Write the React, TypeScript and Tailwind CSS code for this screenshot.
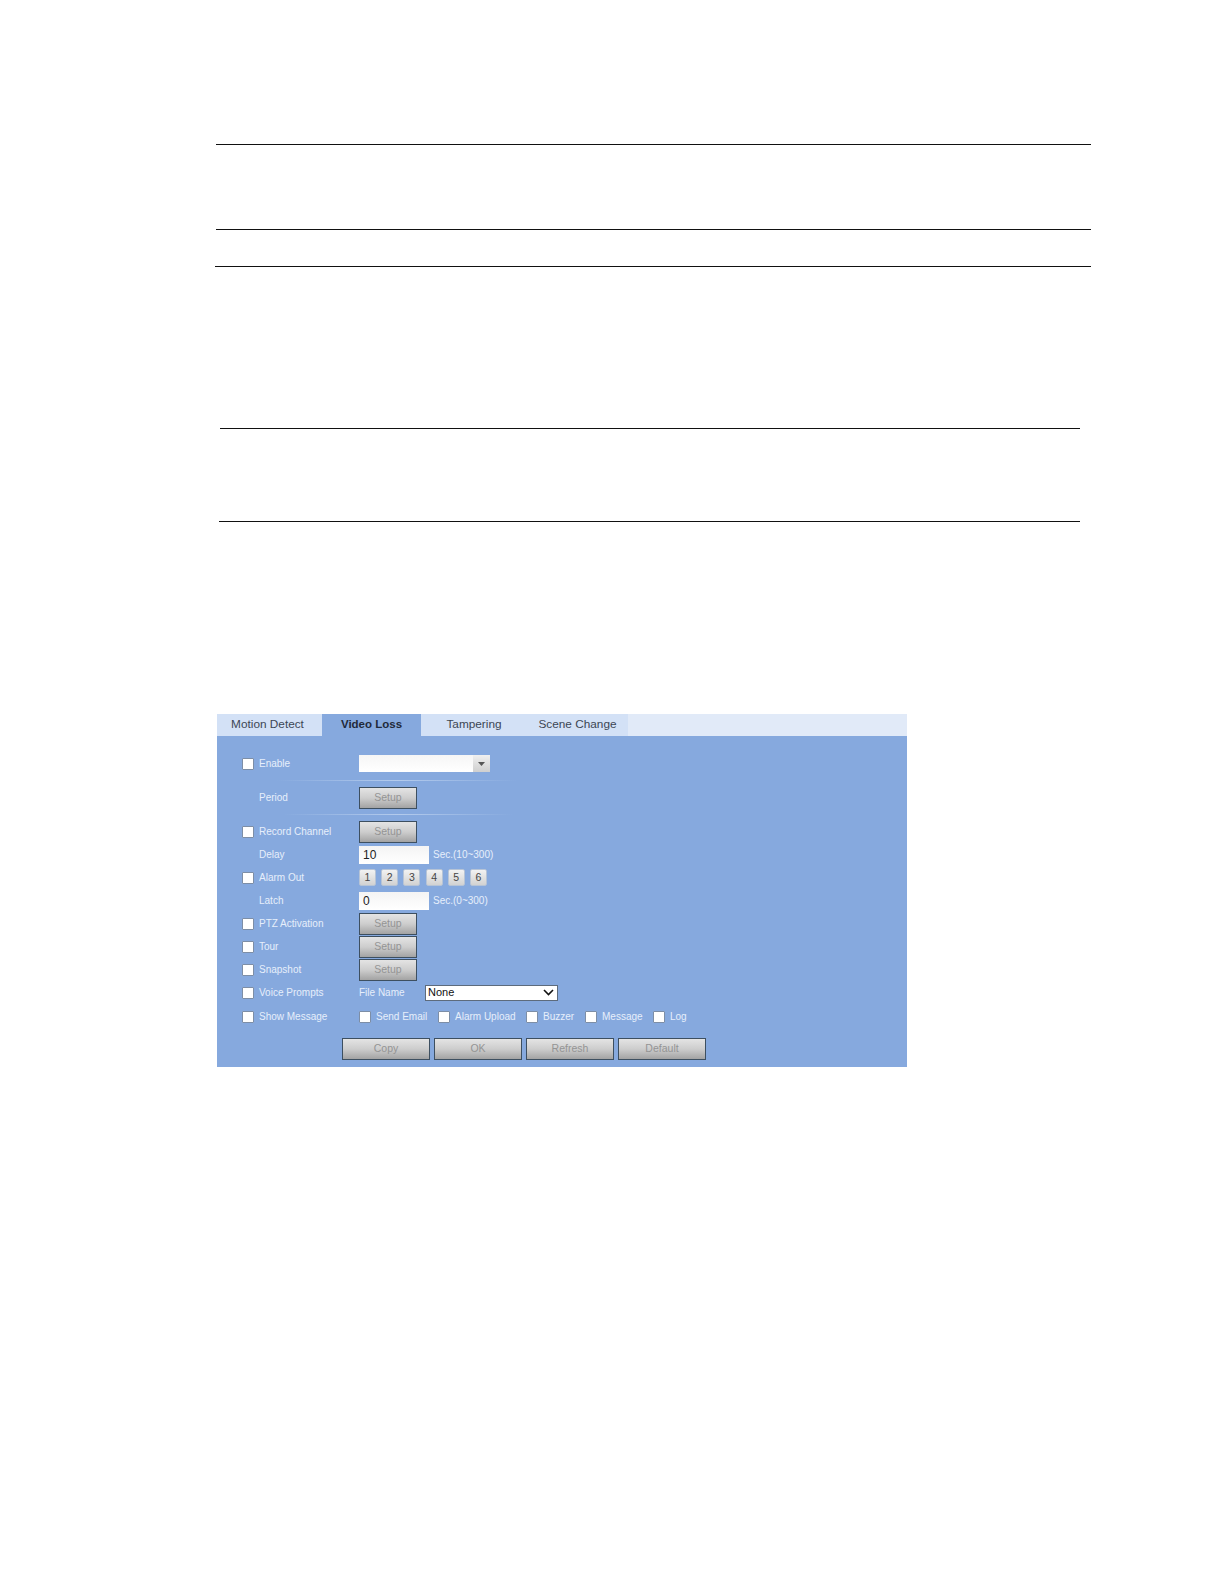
const labelText = "text-[10px] text-[#e6effb] leading-none";

function Rule({ className }: { className: string }) {
  return <div className={"h-px bg-[#111] " + className} />;
}

function Check() {
  return <input type="checkbox" className="appearance-none block w-[12px] h-[12px] bg-white border border-[#7d8ea6] rounded-[1px] shrink-0" />;
}

function SetupButton({ label = "Setup", className = "w-[58px] h-[22px]" }: { label?: string; className?: string }) {
  return (
    <button className={"flex items-center justify-center border border-[#3d4f60] bg-gradient-to-b from-[#e4e4e4] via-[#cdcdcd] to-[#a3a3a3] text-[10.5px] text-[#949494] shrink-0 " + className}>
      {label}
    </button>
  );
}

function Row({ check, label, children, className = "h-[23px]" }: { check?: boolean; label: string; children?: React.ReactNode; className?: string }) {
  return (
    <div className={"flex items-center pl-[25px] " + className}>
      <div className="w-[17px]">{check && <Check />}</div>
      <div className={"w-[100px] " + labelText}>{label}</div>
      {children}
    </div>
  );
}

function TextBox({ value }: { value: string }) {
  return <div className="w-[70px] h-[18px] bg-gradient-to-b from-[#f4f4f4] to-white pl-[4px] text-[12px] leading-[18px] text-[#222]">{value}</div>;
}

function Tab({ label, className, active }: { label: string; className: string; active?: boolean }) {
  return (
    <div className={"flex h-full items-center justify-center " + className + " " + (active ? "bg-[#86a9de] text-[11.5px] font-bold text-[#1f2a3a]" : "bg-[#d3e1f6] text-[11.8px] text-[#3c4654]")}>
      {label}
    </div>
  );
}

function SmallCheck({ label, width }: { label: string; width: string }) {
  return (
    <div className={"flex items-center gap-[5px] " + width}>
      <Check />
      <span className={labelText}>{label}</span>
    </div>
  );
}

function VideoLossPanel() {
  return (
    <div className="ml-[217px] mt-[192px] w-[690px] h-[353px] bg-[#86a9de] font-['Liberation_Sans',Arial,sans-serif]">
      <div className="flex h-[22px] bg-[#e1eaf8]">
        <Tab label="Motion Detect" className="w-[105px] pr-[4px]" />
        <Tab label="Video Loss" className="w-[99px]" active />
        <Tab label="Tampering" className="w-[103px] pl-[3px]" />
        <Tab label="Scene Change" className="w-[104px] pl-[3px]" />
      </div>

      <div className="pt-[19px]">
        <Row check label="Enable" className="h-[17px]">
          <div className="flex w-[131px] h-[17px] bg-gradient-to-b from-[#f6f6f6] to-white">
            <div className="flex-1" />
            <div className="flex w-[17px] items-center justify-center bg-gradient-to-b from-[#f0f0f0] to-[#cfcfcf]">
              <svg width="7" height="4" viewBox="0 0 7 4"><path d="M0 0h7L3.5 4z" fill="#555" /></svg>
            </div>
          </div>
        </Row>
        <div className="ml-[60px] mt-[8px] h-px w-[240px] bg-gradient-to-r from-[#86a9de] via-[#b4cbec] to-[#86a9de]" />
        <Row label="Period" className="h-[22px] mt-[6px]">
          <SetupButton />
        </Row>
        <div className="ml-[66px] mt-[5px] h-px w-[230px] bg-gradient-to-r from-[#86a9de] via-[#b4cbec] to-[#86a9de]" />
        <Row check label="Record Channel" className="h-[23px] mt-[5px]">
          <SetupButton />
        </Row>
        <Row label="Delay">
          <TextBox value="10" />
          <span className={"ml-[4px] " + labelText}>Sec.(10~300)</span>
        </Row>
        <Row check label="Alarm Out">
          <div className="flex gap-[5.2px]">
            {[1, 2, 3, 4, 5, 6].map((n) => (
              <button key={n} className="w-[17px] h-[17px] rounded-[2px] border border-[#b7c4d6] bg-gradient-to-b from-[#f2f2f2] to-[#d2d2d2] text-[10.5px] leading-none text-[#444]">
                {n}
              </button>
            ))}
          </div>
        </Row>
        <Row label="Latch">
          <TextBox value="0" />
          <span className={"ml-[4px] " + labelText}>Sec.(0~300)</span>
        </Row>
        <Row check label="PTZ Activation">
          <SetupButton />
        </Row>
        <Row check label="Tour">
          <SetupButton />
        </Row>
        <Row check label="Snapshot">
          <SetupButton />
        </Row>
        <Row check label="Voice Prompts">
          <div className={"w-[66px] " + labelText}>File Name</div>
          <div className="flex w-[133px] h-[16px] items-center justify-between border border-[#5d6b7c] bg-white pl-[2px] pr-[3px] text-[11px] leading-none text-[#111]">
            None
            <svg width="11" height="7" viewBox="0 0 11 7" fill="none"><path d="M1 1l4.5 4.5L10 1" stroke="#111" strokeWidth="1.6" /></svg>
          </div>
        </Row>
        <Row check label="Show Message" className="h-[23px] mt-[1px]">
          <SmallCheck label="Send Email" width="w-[79px]" />
          <SmallCheck label="Alarm Upload" width="w-[88px]" />
          <SmallCheck label="Buzzer" width="w-[59px]" />
          <SmallCheck label="Message" width="w-[68px]" />
          <SmallCheck label="Log" width="w-[40px]" />
        </Row>
        <div className="mt-[10px] ml-[125px] flex gap-[4px]">
          {["Copy", "OK", "Refresh", "Default"].map((b) => (
            <SetupButton key={b} label={b} className="w-[88px] h-[22px]" />
          ))}
        </div>
      </div>
    </div>
  );
}

export default function App() {
  return (
    <div className="h-[1584px] w-[1224px] overflow-hidden bg-white pt-[144px]">
      <Rule className="ml-[216px] w-[875px]" />
      <Rule className="ml-[216px] w-[875px] mt-[84px]" />
      <Rule className="ml-[215px] w-[876px] mt-[36px]" />
      <Rule className="ml-[220px] w-[860px] mt-[161px]" />
      <Rule className="ml-[219px] w-[861px] mt-[92px]" />
      <VideoLossPanel />
    </div>
  );
}
